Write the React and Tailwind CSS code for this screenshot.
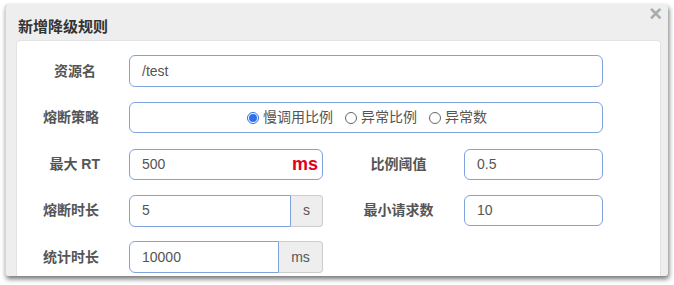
import React from "react";

const font = { fontFamily: '"Liberation Sans", "Noto Sans CJK SC", sans-serif' };

function Label({ children, className = "" }) {
    return (
        <div className={"text-[14px] font-bold text-[#555] " + className}>{children}</div>
    );
}

function Radio({ checked, label }) {
    return (
        <label className="flex items-center gap-[4px] text-[14px] text-[#555]">
            <span
                className={
                    "flex h-[12px] w-[12px] items-center justify-center rounded-full border " +
                    (checked ? "border-[#2f6fe8]" : "border-[#666]")
                }
            >
                {checked && <span className="h-[8px] w-[8px] rounded-full bg-[#2f6fe8]" />}
            </span>
            {label}
        </label>
    );
}

export default function App() {
    return (
        <div className="h-[285px] w-[674px] bg-white pl-[5px] pt-[4px]" style={font}>
            <div className="flex h-[272px] w-[663px] flex-col rounded-[3px] border-l border-[#d6d6d6] bg-[#eeeeee] shadow-[1px_3px_5px_rgba(0,0,0,0.55)]">
                {/* header */}
                <div className="flex h-[36px] items-start justify-between pl-[12px] pr-[6px]">
                    <h4 className="mt-[13px] text-[15px] font-bold leading-[20px] text-[#333]">新增降级规则</h4>
                    <span className="mt-[-1px] text-[22px] font-bold leading-[22px] text-[#aaa]">×</span>
                </div>

                {/* body */}
                <div className="flex-1 pl-[10px] pr-[7px]">
                    <div className="flex h-full flex-col gap-[14.5px] rounded-t-[4px] border border-b-0 border-[#e3e3e3] bg-white pt-[14px]">
                        <div className="flex h-[32px] items-center">
                            <Label className="w-[79px] text-right">资源名</Label>
                            <div className="ml-[33px] flex h-[32px] w-[474px] items-center rounded-[6px] border border-[#7fa3dc] px-[12px] text-[14px] text-[#555]">
                                /test
                            </div>
                        </div>

                        <div className="flex h-[32px] items-center">
                            <Label className="w-[82px] text-right">熔断策略</Label>
                            <div className="ml-[30px] flex h-[31px] w-[474px] items-center justify-center gap-[12px] rounded-[6px] border border-[#7fa3dc] pl-[2px]">
                                <Radio checked label="慢调用比例" />
                                <Radio label="异常比例" />
                                <Radio label="异常数" />
                            </div>
                        </div>

                        <div className="flex h-[32px] items-center">
                            <Label className="w-[83px] text-right">最大 RT</Label>
                            <div className="ml-[29px] flex h-[31px] w-[194px] items-center justify-between rounded-[6px] border border-[#7fa3dc] pl-[12px] pr-[4px] text-[14px] text-[#555]">
                                <span>500</span>
                                <span className="text-[18px] font-bold text-[#e0001b]">ms</span>
                            </div>
                            <Label className="ml-[10px] w-[131px] text-center">比例阈值</Label>
                            <div className="flex h-[31px] w-[139px] items-center rounded-[6px] border border-[#7fa3dc] px-[12px] text-[14px] text-[#555]">
                                0.5
                            </div>
                        </div>

                        <div className="flex h-[32px] items-center">
                            <Label className="w-[82px] text-right">熔断时长</Label>
                            <div className="ml-[30px] flex h-[32px]">
                                <div className="flex w-[162px] items-center rounded-l-[6px] border border-[#7fa3dc] px-[12px] text-[14px] text-[#555]">
                                    5
                                </div>
                                <div className="flex w-[32px] items-center justify-center rounded-r-[4px] border border-l-0 border-[#cccccc] bg-[#eeeeee] text-[14px] text-[#555]">
                                    s
                                </div>
                            </div>
                            <Label className="ml-[10px] w-[131px] text-center">最小请求数</Label>
                            <div className="flex h-[31px] w-[139px] items-center rounded-[6px] border border-[#7fa3dc] px-[12px] text-[14px] text-[#555]">
                                10
                            </div>
                        </div>

                        <div className="flex h-[32px] items-center">
                            <Label className="w-[82px] text-right">统计时长</Label>
                            <div className="ml-[30px] flex h-[32px]">
                                <div className="flex w-[150px] items-center rounded-l-[6px] border border-[#7fa3dc] px-[12px] text-[14px] text-[#555]">
                                    10000
                                </div>
                                <div className="flex w-[44px] items-center justify-center rounded-r-[4px] border border-l-0 border-[#cccccc] bg-[#eeeeee] text-[14px] text-[#555]">
                                    ms
                                </div>
                            </div>
                        </div>
                    </div>
                </div>
            </div>
        </div>
    );
}
